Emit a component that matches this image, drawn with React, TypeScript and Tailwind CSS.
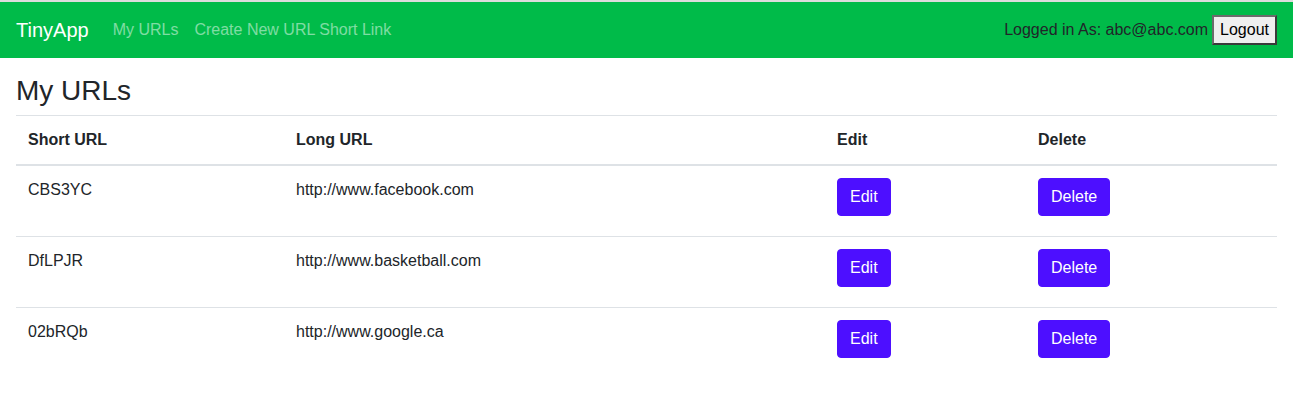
const urls = [
  { short: 'CBS3YC', long: 'http://www.facebook.com' },
  { short: 'DfLPJR', long: 'http://www.basketball.com' },
  { short: '02bRQb', long: 'http://www.google.ca' },
]

function Navbar() {
  return (
    <nav className="flex items-center justify-between bg-[#00bb49] px-4 py-2 border-t-2 border-[#dcdcdc]">
      <div className="flex items-center">
        <a className="mr-4 py-[5px] text-[20px] leading-[30px] text-white">TinyApp</a>
        <a className="px-2 py-2 text-white/50">My URLs</a>
        <a className="px-2 py-2 text-white/50">Create New URL Short Link</a>
      </div>
      <div className="flex items-center">
        <span className="text-[#212529]">Logged in As: abc@abc.com</span>
        <button className="ml-[4px] border-2 border-t-[#6b6b6b] border-l-[#6b6b6b] border-r-[#3a3a3a] border-b-[#3a3a3a] bg-[#efefef] px-[6px] py-[2px] leading-[22px] text-black">
          Logout
        </button>
      </div>
    </nav>
  )
}

function Btn({ label }: { label: string }) {
  return (
    <button className="mb-2 rounded border border-[#4d0fff] bg-[#4d0fff] px-3 py-1.5 leading-6 text-white">
      {label}
    </button>
  )
}

export default function App() {
  return (
    <div className="min-h-screen bg-white font-['Liberation_Sans',Arial,sans-serif] text-base leading-6 text-[#212529]">
      <Navbar />
      <main className="px-4 pt-4">
        <h3 className="mb-[7px] text-[28px] leading-[1.2]">My URLs</h3>
        <table className="w-full border-collapse text-left">
          <thead>
            <tr className="border-t border-b-2 border-t-[#dee2e6] border-b-[#dee2e6]">
              <th className="w-[268px] p-3 font-bold">Short URL</th>
              <th className="w-[541px] p-3 font-bold">Long URL</th>
              <th className="w-[201px] p-3 font-bold">Edit</th>
              <th className="p-3 font-bold">Delete</th>
            </tr>
          </thead>
          <tbody>
            {urls.map((u, i) => (
              <tr key={u.short} className={i > 0 ? 'border-t border-[#dee2e6]' : ''}>
                <td className="p-3 align-top">{u.short}</td>
                <td className="p-3 align-top">{u.long}</td>
                <td className="p-3 align-top">
                  <Btn label="Edit" />
                </td>
                <td className="p-3 align-top">
                  <Btn label="Delete" />
                </td>
              </tr>
            ))}
          </tbody>
        </table>
      </main>
    </div>
  )
}
